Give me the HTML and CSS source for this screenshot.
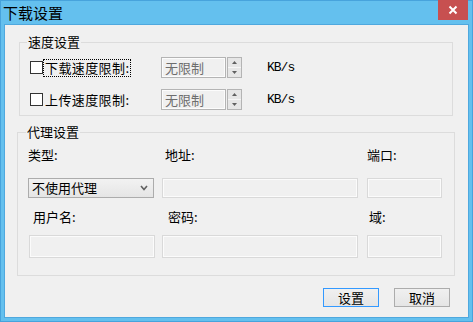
FILE: index.html
```html
<!DOCTYPE html>
<html lang="zh-CN">
<head>
<meta charset="utf-8">
<title>下载设置</title>
<link rel="stylesheet" href="styles.css">
</head>
<body>
<div class="window">
  <div class="titlebar">
    <span class="title">下载设置</span>
    <span class="close">
      <svg width="10" height="10" viewBox="0 0 10 10"><path d="M1.5 1.5 L8.5 8.5 M8.5 1.5 L1.5 8.5" stroke="#fff" stroke-width="2" fill="none"/></svg>
    </span>
  </div>
  <div class="client">
    <div class="group group-speed">
      <span class="legend">速度设置</span>
      <div class="speed-row">
        <div class="check-cell">
          <span class="checkbox"></span>
          <span class="check-label focused">下载速度限制:</span>
        </div>
        <div class="spin">
          <span class="spin-input">无限制</span>
          <span class="spin-buttons">
            <span class="spin-btn"><svg width="5" height="3" viewBox="0 0 5 3"><path d="M0 3 L2.5 0 L5 3 Z" fill="#606060"/></svg></span>
            <span class="spin-btn"><svg width="5" height="3" viewBox="0 0 5 3"><path d="M0 0 L2.5 3 L5 0 Z" fill="#606060"/></svg></span>
          </span>
        </div>
        <span class="unit">KB/s</span>
      </div>
      <div class="speed-row">
        <div class="check-cell">
          <span class="checkbox"></span>
          <span class="check-label">上传速度限制:</span>
        </div>
        <div class="spin">
          <span class="spin-input">无限制</span>
          <span class="spin-buttons">
            <span class="spin-btn"><svg width="5" height="3" viewBox="0 0 5 3"><path d="M0 3 L2.5 0 L5 3 Z" fill="#606060"/></svg></span>
            <span class="spin-btn"><svg width="5" height="3" viewBox="0 0 5 3"><path d="M0 0 L2.5 3 L5 0 Z" fill="#606060"/></svg></span>
          </span>
        </div>
        <span class="unit">KB/s</span>
      </div>
    </div>

    <div class="group group-proxy">
      <span class="legend">代理设置</span>
      <div class="proxy-row label-row1">
        <span class="lbl">类型:</span>
        <span class="lbl lbl-addr">地址:</span>
        <span class="lbl">端口:</span>
      </div>
      <div class="proxy-row field-row1">
        <div class="select">
          <span>不使用代理</span>
          <svg width="8" height="6" viewBox="0 0 8 6"><path d="M1 1 L4 4.5 L7 1" stroke="#606060" stroke-width="1.6" fill="none"/></svg>
        </div>
        <span class="field field-addr"></span>
        <span class="field field-port"></span>
      </div>
      <div class="proxy-row label-row2">
        <span class="lbl lbl-user">用户名:</span>
        <span class="lbl lbl-pass">密码:</span>
        <span class="lbl lbl-domain">域:</span>
      </div>
      <div class="proxy-row field-row2">
        <span class="field field-user"></span>
        <span class="field field-addr"></span>
        <span class="field field-port"></span>
      </div>
    </div>

    <div class="buttons">
      <span class="btn btn-default">设置</span>
      <span class="btn">取消</span>
    </div>
  </div>
</div>
</body>
</html>
```

FILE: styles.css
```css
html, body {
  margin: 0;
  padding: 0;
}
body {
  width: 473px;
  height: 322px;
  overflow: hidden;
  font-family: "Noto Sans CJK SC", "Noto Sans", sans-serif;
  font-size: 13px;
  color: #000;
}
.window {
  width: 473px;
  height: 322px;
  box-sizing: border-box;
  background: #64c0ee;
  border: 1px solid #47a3dc;
  padding: 0 3px 3px 3px;
  display: flex;
  flex-direction: column;
}
.titlebar {
  height: 23px;
  margin: 0 -3px;
  padding-left: 2px;
  display: flex;
  justify-content: space-between;
  align-items: flex-start;
}
.title {
  font-size: 15px;
  line-height: 23px;
  color: #000;
}
.close {
  width: 30px;
  height: 20px;
  margin-right: 4px;
  margin-top: -1px;
  background: #c75050;
  display: flex;
  align-items: center;
  justify-content: center;
}
.client {
  flex: 1;
  background: #f0f0f0;
  border: 1px solid #4fa8de;
  display: flex;
  flex-direction: column;
  align-items: flex-start;
}
.group {
  position: relative;
  box-sizing: border-box;
  border: 1px solid #dcdcdc;
}
.legend {
  position: absolute;
  top: -9px;
  line-height: 16px;
  padding: 0 1px;
  background: #f0f0f0;
}
.group-speed {
  margin: 17px 0 0 14px;
  width: 434px;
  height: 74px;
  padding: 14px 0 0 10px;
  display: flex;
  flex-direction: column;
  gap: 11px;
}
.group-speed .legend {
  left: 7px;
}
.speed-row {
  display: grid;
  grid-template-columns: 131px 81px auto;
  align-items: center;
  height: 21px;
}
.check-cell {
  display: flex;
  align-items: center;
  gap: 1px;
}
.checkbox {
  width: 13px;
  height: 13px;
  box-sizing: border-box;
  border: 1px solid #333;
  background: #fff;
}
.check-label {
  line-height: 16px;
  padding: 0 1px;
  letter-spacing: 0.4px;
  outline: 1px dotted transparent;
}
.check-label.focused {
  outline: 1px dotted #000;
}
.spin {
  display: flex;
  height: 21px;
  gap: 1px;
}
.spin-input {
  width: 65px;
  box-sizing: border-box;
  border: 1px solid #b4b4b4;
  box-shadow: inset 0 0 0 1px #fcfcfc;
  background: #f0f0f0;
  color: #6d6d6d;
  padding-left: 3px;
  line-height: 19px;
}
.spin-buttons {
  width: 15px;
  box-sizing: border-box;
  border: 1px solid #b4b4b4;
  display: flex;
  flex-direction: column;
  gap: 1px;
  background: #f6f6f6;
}
.spin-btn {
  flex: 1;
  background: #e6e6e6;
  display: flex;
  align-items: center;
  justify-content: center;
}
.unit {
  margin-left: 25px;
  font-family: "Liberation Mono", monospace;
  font-size: 13px;
  letter-spacing: -1px;
}
.group-proxy {
  margin: 16px 0 0 12px;
  width: 438px;
  height: 144px;
  padding: 14px 0 0 10px;
  display: flex;
  flex-direction: column;
}
.group-proxy .legend {
  left: 8px;
}
.proxy-row {
  display: grid;
  grid-template-columns: 134px 205px 75px;
  align-items: center;
}
.lbl {
  line-height: 16px;
}
.lbl-addr { margin-left: 3px; }
.lbl-user { margin-left: 5px; }
.lbl-pass { margin-left: 6px; }
.lbl-domain { margin-left: 2px; }
.field-row1 {
  margin-top: 15px;
  height: 20px;
}
.label-row2 {
  margin-top: 11px;
}
.field-row2 {
  margin-top: 10px;
  height: 23px;
}
.select {
  width: 126px;
  height: 20px;
  box-sizing: border-box;
  border: 1px solid #acacac;
  background: linear-gradient(#f2f2f2, #e5e5e5);
  display: flex;
  align-items: center;
  justify-content: space-between;
  padding: 0 5px 0 3px;
  line-height: 18px;
}
.field {
  display: block;
  height: 100%;
  box-sizing: border-box;
  border: 1px solid #d9d9d9;
  box-shadow: inset 0 0 0 1px #fbfbfb;
  background: #f0f0f0;
}
.field-addr { width: 196px; }
.field-port { width: 75px; }
.field-user { width: 126px; margin-left: 1px; }
.buttons {
  align-self: flex-end;
  margin: 12px 18px 0 0;
  display: flex;
  gap: 15px;
}
.btn {
  width: 56px;
  height: 19px;
  box-sizing: border-box;
  border: 1px solid #acacac;
  background: linear-gradient(#f0f0f0, #e5e5e5);
  text-align: center;
  line-height: 17px;
}
.btn-default {
  border-color: #3399ff;
}
```
